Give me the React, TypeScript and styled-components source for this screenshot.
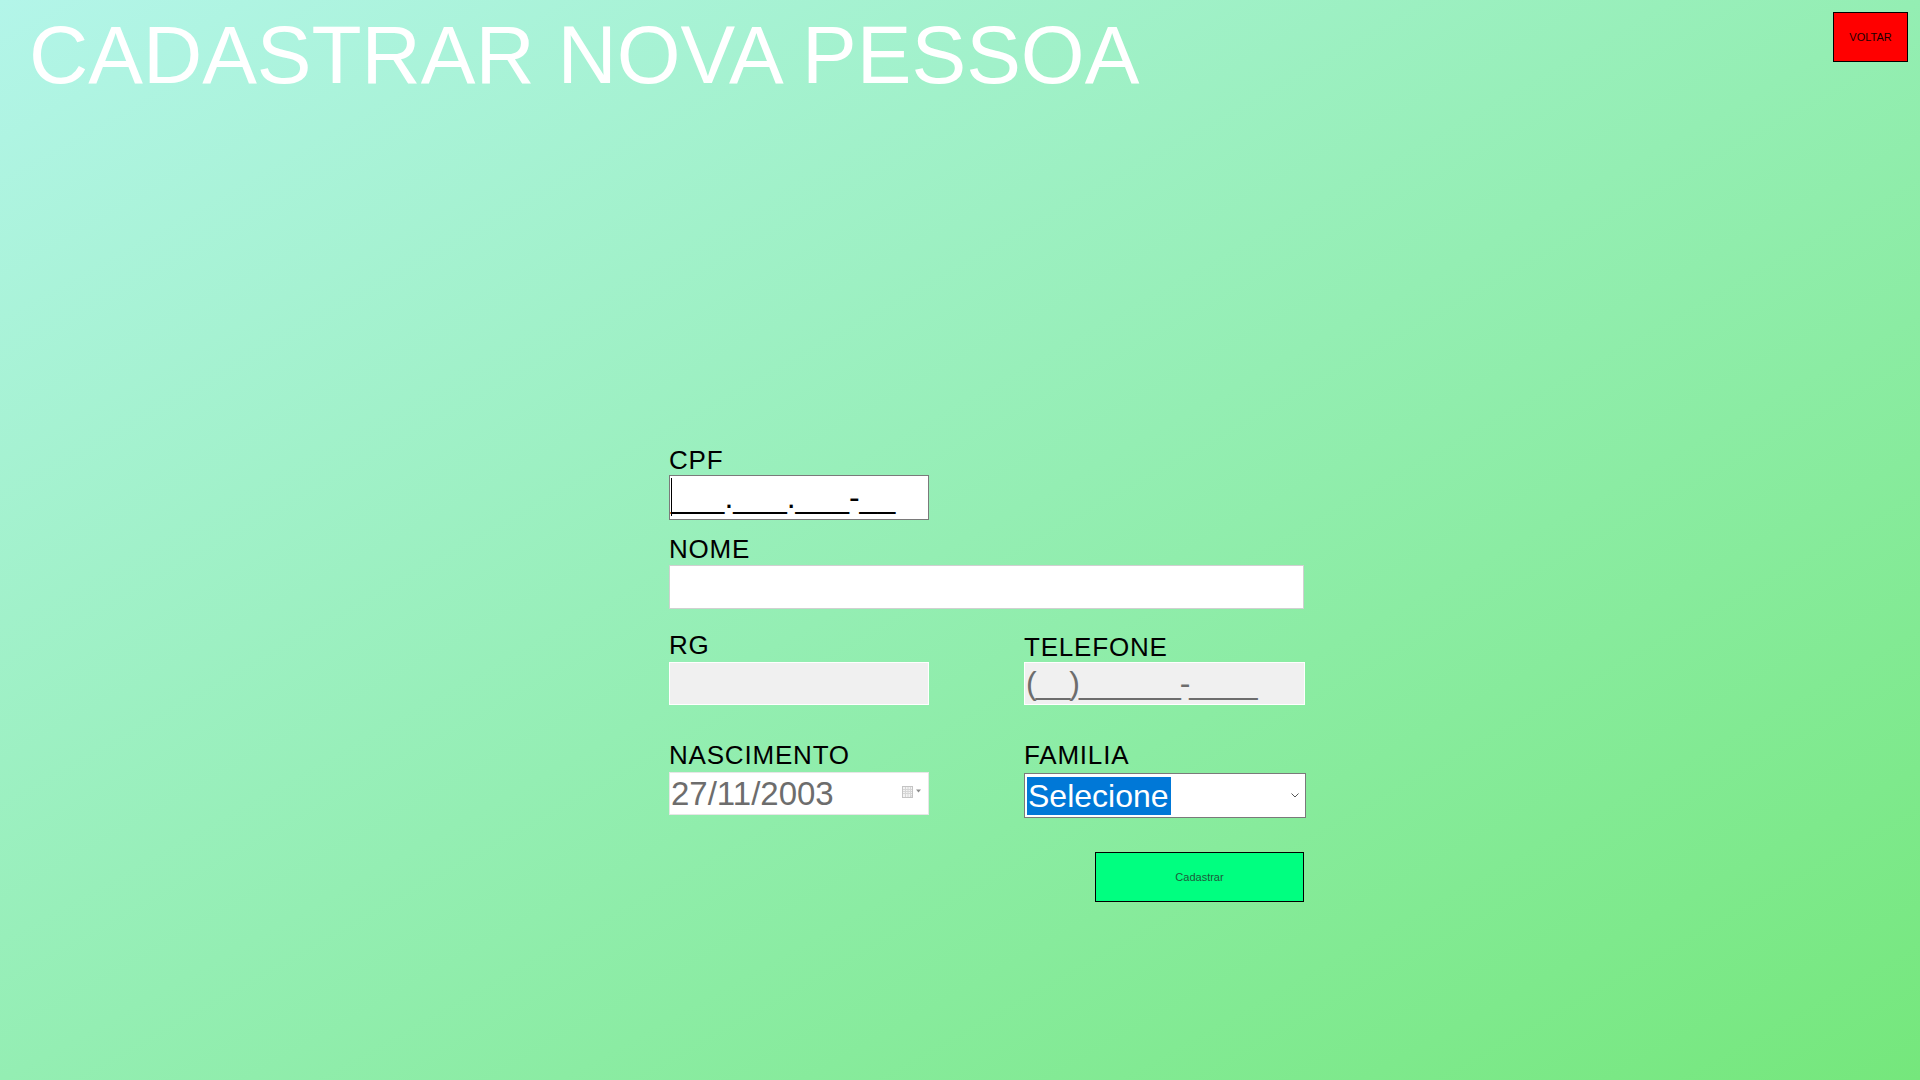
import React from "react";
import styled, { createGlobalStyle } from "styled-components";

const GlobalStyle = createGlobalStyle`
  html, body {
    margin: 0;
    padding: 0;
  }
  body {
    font-family: "Liberation Sans", Arial, sans-serif;
  }
  * {
    box-sizing: border-box;
  }
`;

const Page = styled.div`
  width: 100%;
  min-height: 1080px;
  display: flex;
  flex-direction: column;
  background: linear-gradient(to bottom right, #b3f5e9 0%, #94eeb3 50%, #75e77c 100%);
  overflow: hidden;
`;

const Header = styled.header`
  display: flex;
  justify-content: space-between;
  align-items: flex-start;
`;

const Title = styled.h1`
  margin: 0;
  padding: 8px 0 0 29px;
  font-family: "Liberation Sans", Arial, sans-serif;
  font-size: 82px;
  line-height: 93px;
  font-weight: 400;
  color: #ffffff;
  white-space: nowrap;
`;

const BackButton = styled.button`
  margin: 12px 12px 0 0;
  width: 75px;
  height: 50px;
  padding: 0;
  background: #ff0000;
  border: 1px solid #000000;
  font-family: "Liberation Sans", Arial, sans-serif;
  font-size: 11px;
  color: #1a0000;
  cursor: pointer;
`;

const Form = styled.form`
  margin: 344px 0 0 669px;
  width: 636px;
  display: grid;
  grid-template-columns: 260px 281px;
  column-gap: 95px;
`;

const Field = styled.div<{ $span?: boolean; $top: number; $align?: string }>`
  display: flex;
  flex-direction: column;
  grid-column: ${(p) => (p.$span ? "1 / span 2" : "auto")};
  margin-top: ${(p) => p.$top}px;
  align-self: ${(p) => p.$align ?? "start"};
`;

const Label = styled.label<{ $gap: number }>`
  display: block;
  font-family: "Liberation Sans", Arial, sans-serif;
  font-size: 26px;
  line-height: 30px;
  letter-spacing: 0.8px;
  color: #000000;
  margin-bottom: ${(p) => p.$gap}px;
  white-space: nowrap;
`;

type BoxVariant = "focused" | "white" | "gray" | "date";

const boxStyles: Record<BoxVariant, { bg: string; border: string; color: string }> = {
  focused: { bg: "#ffffff", border: "#7a7a7a", color: "#000000" },
  white: { bg: "#ffffff", border: "#d0d0d0", color: "#000000" },
  gray: { bg: "#f0f0f0", border: "#ffffff", color: "#6d6d6d" },
  date: { bg: "#ffffff", border: "#e6e6e6", color: "#6d6d6d" },
};

const TextBox = styled.div<{ $variant: BoxVariant; $height: number; $width?: number }>`
  display: flex;
  align-items: center;
  justify-content: space-between;
  width: ${(p) => (p.$width ? `${p.$width}px` : "100%")};
  height: ${(p) => p.$height}px;
  padding: 0 0 0 1px;
  background: ${(p) => boxStyles[p.$variant].bg};
  border: 1px solid ${(p) => boxStyles[p.$variant].border};
  color: ${(p) => boxStyles[p.$variant].color};
  font-family: "Liberation Sans", Arial, sans-serif;
  font-size: 32px;
  white-space: nowrap;
  overflow: hidden;
`;

const MaskText = styled.span`
  display: inline-flex;
  align-items: center;
  position: relative;
`;

const PhoneMask = styled.span`
  letter-spacing: -1px;
`;

const Caret = styled.span`
  position: absolute;
  left: 0;
  top: 50%;
  width: 1px;
  height: 38px;
  margin-top: -20px;
  background: #000000;
`;

const DateText = styled.span`
  font-size: 33px;
`;

const CalendarIcon = styled.svg`
  flex: none;
  margin-right: 6px;
  margin-top: -4px;
`;

const SelectBox = styled.div`
  display: flex;
  align-items: center;
  justify-content: space-between;
  width: 282px;
  height: 45px;
  padding: 0 0 0 2px;
  background: #ffffff;
  border: 1px solid #7a7a7a;
  font-family: "Liberation Sans", Arial, sans-serif;
  font-size: 32px;
`;

const Highlight = styled.span`
  display: inline-block;
  padding: 0 2px 0 1px;
  line-height: 38px;
  background: #0078d7;
  color: #ffffff;
`;

const Chevron = styled.svg`
  flex: none;
  margin-right: 6px;
`;

const SubmitButton = styled.button`
  grid-column: 2;
  justify-self: end;
  margin: 34px 1px 0 0;
  width: 209px;
  height: 50px;
  padding: 0;
  background: #00ff80;
  border: 1px solid #000000;
  font-family: "Liberation Sans", Arial, sans-serif;
  font-size: 11px;
  color: #1d5a3a;
  cursor: pointer;
`;

export default function App() {
  return (
    <>
      <GlobalStyle />
      <Page>
        <Header>
          <Title>CADASTRAR NOVA PESSOA</Title>
          <BackButton type="button">VOLTAR</BackButton>
        </Header>

        <Form onSubmit={(e) => e.preventDefault()}>
          <Field $top={0}>
            <Label $gap={0}>CPF</Label>
            <TextBox $variant="focused" $height={45}>
              <MaskText>
                <Caret />
                ___.___.___-__
              </MaskText>
            </TextBox>
          </Field>
          <div />

          <Field $span $top={14}>
            <Label $gap={1}>NOME</Label>
            <TextBox $variant="white" $height={44} $width={635} />
          </Field>

          <Field $top={21}>
            <Label $gap={2}>RG</Label>
            <TextBox $variant="gray" $height={43} />
          </Field>
          <Field $top={21} $align="end">
            <Label $gap={0}>TELEFONE</Label>
            <TextBox $variant="gray" $height={43}>
              <PhoneMask>(__)______-____</PhoneMask>
            </TextBox>
          </Field>

          <Field $top={35}>
            <Label $gap={2}>NASCIMENTO</Label>
            <TextBox $variant="date" $height={43}>
              <DateText>27/11/2003</DateText>
              <CalendarIcon width="20" height="12" viewBox="0 0 20 12">
                <rect x="0.5" y="0.5" width="10" height="11" fill="#f3f3f3" stroke="#c4c4c4" />
                <path d="M1 3.5h9M1 5.5h9M1 7.5h9M3.5 1v10M6 1v10M8.5 1v10" stroke="#d6d6d6" strokeWidth="1" />
                <path d="M8 11.5L10.5 9V11.5Z" fill="#ffffff" stroke="#bdbdbd" strokeWidth="0.8" />
                <path d="M14 3.5h5l-2.5 3z" fill="#8c8c8c" />
              </CalendarIcon>
            </TextBox>
          </Field>
          <Field $top={35}>
            <Label $gap={3}>FAMILIA</Label>
            <SelectBox>
              <Highlight>Selecione</Highlight>
              <Chevron width="8" height="5" viewBox="0 0 8 5">
                <polyline points="0.5,0.5 4,4 7.5,0.5" fill="none" stroke="#555555" strokeWidth="1" />
              </Chevron>
            </SelectBox>
          </Field>

          <SubmitButton type="submit">Cadastrar</SubmitButton>
        </Form>
      </Page>
    </>
  );
}
